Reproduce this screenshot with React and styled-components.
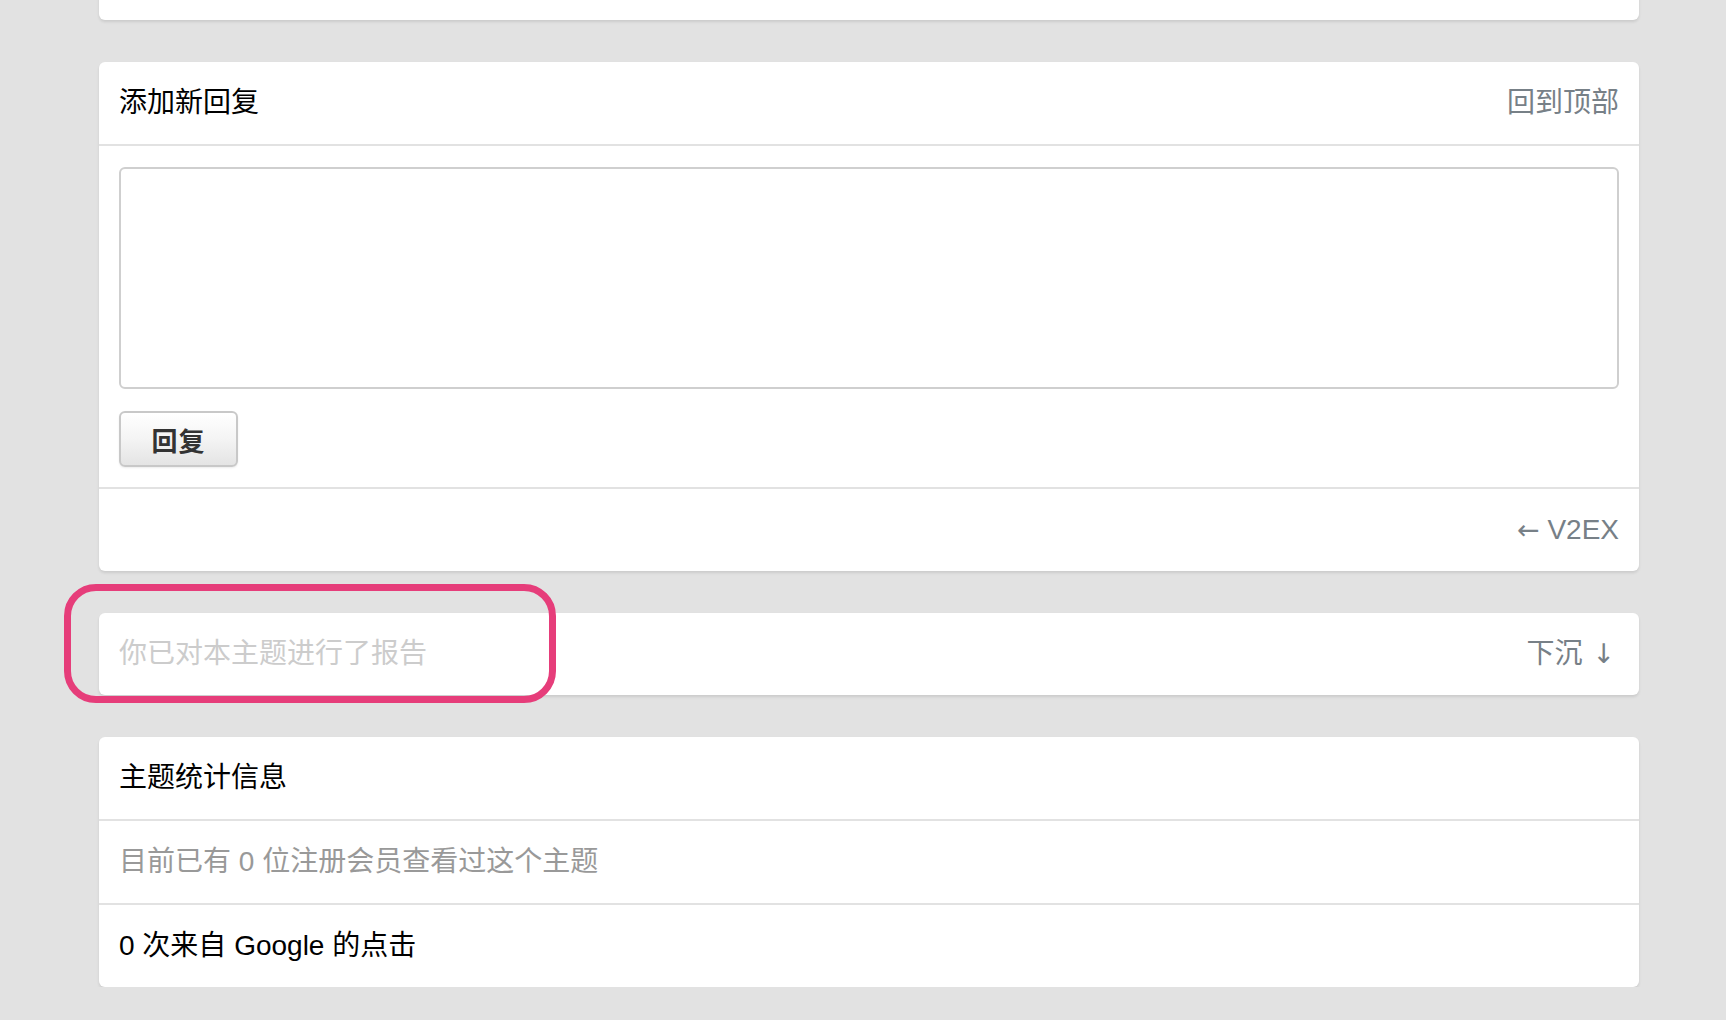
import React from "react";
import styled, { createGlobalStyle } from "styled-components";

const GlobalStyle = createGlobalStyle`
  html, body {
    margin: 0;
    padding: 0;
    background: #e2e2e2;
  }
  body {
    font-family: "Liberation Sans", "Noto Sans CJK SC", sans-serif;
    overflow: hidden;
  }
`;

const Page = styled.div`
  width: 1540px;
  padding-left: 99px;
  display: flex;
  flex-direction: column;
  gap: 42px;
`;

const Box = styled.div`
  position: relative;
  background: #fff;
  border-radius: 6px;
  box-shadow: 0 2px 3px rgba(0, 0, 0, 0.1);
`;

const TopStub = styled(Box)`
  height: 40px;
  margin-top: -20px;
`;

const Cell = styled.div`
  display: flex;
  align-items: center;
  justify-content: ${(p) => (p.end ? "flex-end" : "space-between")};
  padding: 20px 20px;
  font-size: 28px;
  line-height: 42px;
  color: ${(p) => p.color || "#000"};
  border-bottom: ${(p) => (p.last ? "none" : "2px solid #e2e2e2")};
`;

const GrayLink = styled.span`
  color: #778087;
`;

const Arrow = styled.span`
  font-family: "DejaVu Sans", sans-serif;
  font-size: 27px;
  margin-left: ${(p) => p.gapLeft || 0}px;
  margin-right: ${(p) => p.gapRight || 0}px;
`;

const FormArea = styled.div`
  display: flex;
  flex-direction: column;
  align-items: flex-start;
  gap: 22px;
  padding: 21px 20px 20px;
  border-bottom: 2px solid #e2e2e2;
`;

const TextArea = styled.textarea`
  box-sizing: border-box;
  width: 100%;
  height: 222px;
  border: 2px solid #cfcfcf;
  border-radius: 6px;
  resize: none;
  outline: none;
  font-size: 27px;
  font-family: inherit;
`;

const SubmitButton = styled.button`
  box-sizing: border-box;
  width: 119px;
  height: 56px;
  border: 2px solid #c8c8c8;
  border-radius: 6px;
  background: linear-gradient(to bottom, #ffffff 0%, #f4f4f4 50%, #e4e4e4 100%);
  box-shadow: 0 1px 2px rgba(0, 0, 0, 0.08);
  font-family: "Liberation Sans", "Noto Sans CJK SC", sans-serif;
  font-size: 26px;
  font-weight: 700;
  color: #333;
  letter-spacing: 1px;
  cursor: pointer;
`;

const Highlight = styled.div`
  position: absolute;
  left: -35px;
  top: -29px;
  width: 492px;
  height: 119px;
  box-sizing: border-box;
  border: 7px solid #e63d7a;
  border-radius: 32px;
  pointer-events: none;
`;

export default function App() {
  return (
    <>
      <GlobalStyle />
      <Page>
        <TopStub />

        <Box>
          <Cell>
            <span>添加新回复</span>
            <GrayLink>回到顶部</GrayLink>
          </Cell>
          <FormArea>
            <TextArea />
            <SubmitButton type="button">回复</SubmitButton>
          </FormArea>
          <Cell last end="true">
            <GrayLink>
              <Arrow>←</Arrow> V2EX
            </GrayLink>
          </Cell>
        </Box>

        <Box>
          <Cell last color="#cccccc">
            <span>你已对本主题进行了报告</span>
            <GrayLink>
              下沉 <Arrow gapLeft={2} gapRight={4}>↓</Arrow>
            </GrayLink>
          </Cell>
          <Highlight />
        </Box>

        <Box>
          <Cell>主题统计信息</Cell>
          <Cell color="#999999">目前已有 0 位注册会员查看过这个主题</Cell>
          <Cell last>0 次来自 Google 的点击</Cell>
        </Box>
      </Page>
    </>
  );
}
